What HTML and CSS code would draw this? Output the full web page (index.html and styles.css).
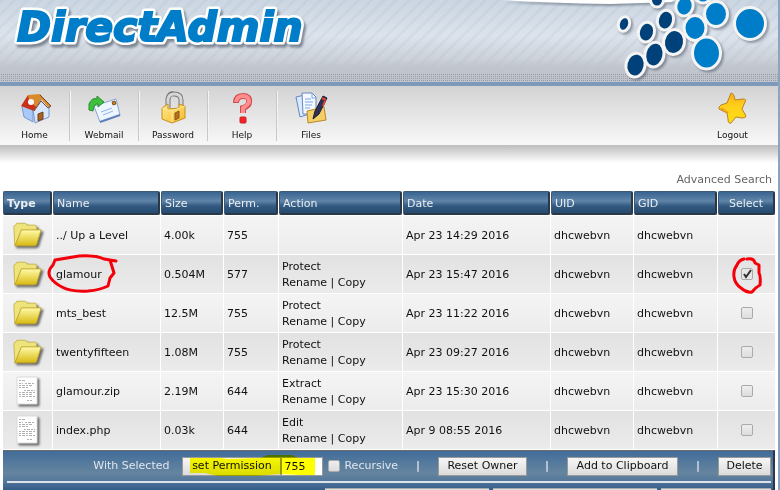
FILE: index.html
```html
<!DOCTYPE html>
<html lang="en">
<head>
<meta charset="utf-8">
<title>DirectAdmin</title>
<link rel="stylesheet" href="styles.css">
</head>
<body>
<svg class="defs" aria-hidden="true">
  <defs>
    <linearGradient id="fold" x1="0" y1="0" x2="0" y2="1"><stop offset="0" stop-color="#fffbaa"/><stop offset="1" stop-color="#d8b90f"/></linearGradient>
    <linearGradient id="gold" x1="0" y1="0" x2="1" y2="1"><stop offset="0" stop-color="#ffe98a"/><stop offset="1" stop-color="#f5bb2c"/></linearGradient>
    <linearGradient id="star" x1="0" y1="0" x2="0" y2="1"><stop offset="0" stop-color="#f9ac12"/><stop offset=".45" stop-color="#ffd11a"/><stop offset="1" stop-color="#ffde12"/></linearGradient>
    <symbol id="folder" viewBox="0 0 34 28">
      <path d="M3 25 L2 5 Q2 3 4 3 L5 1 H14 L16 3 H24 Q26 3 26 5 V14" fill="#efe47c" stroke="#c9b550"/>
      <path d="M3 25 L10 8 H31 L26 24 Q25 25 23 25 Z" fill="url(#fold)" stroke="#bfa12c"/>
    </symbol>
    <symbol id="doc" viewBox="0 0 24 30">
      <path d="M1 1 H21 V28 H1 Z" fill="#fff" stroke="#dcdcdc"/>
      <path d="M3 4.500 H9 M3 7.500 H7 M9 7.500 H18 M3 9.500 H17 M3 11.500 H12 M8 14.500 H19 M3 16.500 H19 M3 18.500 H17 M3 20.500 H19 M11 24.500 H16" stroke="#b0b0b0" stroke-dasharray="2 1 3 1"/>
    </symbol>
  </defs>
</svg>
<div class="page">
  <header class="banner">
    <h1 class="brand">
      <svg class="brand-art" width="320" height="60" viewBox="0 0 320 60" role="img" aria-label="DirectAdmin">
        <defs><text id="wordmark" x="17" y="41">DirectAdmin</text></defs>
        <use class="brand-edge" href="#wordmark"/>
        <use class="brand-face" href="#wordmark"/>
      </svg>
    </h1>
    <svg class="dots" width="280" height="86" viewBox="-100 0 280 86" aria-hidden="true">
      <path d="M-98 0H75L71 2Q40 3 10 4Q-50 3 -98 0Z" fill="#fff"/>
      <g stroke="#f4f4f4" stroke-width="3">
        <g fill="#00417a">
          <ellipse cx="24" cy="24" rx="5.500" ry="7.500" transform="rotate(18 24 24)"/>
          <ellipse cx="57" cy="0" rx="6.500" ry="7"/>
          <ellipse cx="46.500" cy="32" rx="8" ry="10" transform="rotate(15 46 32)"/>
          <ellipse cx="65.500" cy="20" rx="8" ry="10" transform="rotate(15 65 20)"/>
          <ellipse cx="35.500" cy="65" rx="9.500" ry="12" transform="rotate(12 35 65)"/>
          <ellipse cx="54.500" cy="54.500" rx="9.500" ry="12.500" transform="rotate(12 54 54)"/>
          <ellipse cx="74" cy="42" rx="10.500" ry="12.500" transform="rotate(10 74 42)"/>
        </g>
        <g fill="#007dc8">
          <ellipse cx="103" cy="-5" rx="8" ry="8"/>
          <ellipse cx="84.500" cy="6" rx="8.500" ry="10" transform="rotate(15 84 6)"/>
          <ellipse cx="95" cy="28" rx="11" ry="12.500"/>
          <ellipse cx="116" cy="14" rx="11.500" ry="12.500"/>
          <ellipse cx="106.500" cy="53" rx="14" ry="16"/>
          <ellipse cx="150" cy="23.500" rx="15.500" ry="16"/>
        </g>
      </g>
    </svg>
  </header>
  <nav class="toolbar">
    <a class="tool" href="#">
      <svg width="34" height="34" viewBox="0 0 34 34" aria-hidden="true">
        <path d="M4 16 L8 11 L15 19 V31 L6 26 Z" fill="#a9c9f8" stroke="#7898cc"/>
        <path d="M15 19 L24 8 L31 15 V26 L17 32 Z" fill="#d7e7ff" stroke="#7898cc"/>
        <path d="M3 15 L10 4 L24 6 L16 20 Z" fill="#c83218"/>
        <path d="M10 4 L22 3 L33 15 L30 16 L23 8 L18 16 L11 9Z" fill="#d98a2a"/>
        <path d="M22 4 L33 15 L30 17 L23 10 L16 20" fill="none" stroke="#78452a"/>
        <path d="M20 23 L25 21 V28 L20 30Z" fill="#a66420" stroke="#754117"/>
        <circle cx="13" cy="11" r="3" fill="#f5f8ff"/>
      </svg>
      <span>Home</span>
    </a>
    <a class="tool" href="#">
      <svg width="34" height="34" viewBox="0 0 34 34" aria-hidden="true">
        <path d="M7 15 L29 8 L33 24 L13 31 Z" fill="#edf5ff" stroke="#8aa6d8"/>
        <path d="M13 31 L33 24" stroke="#5f82bd" stroke-width="2"/>
        <path d="M14 21 L25 17 M16 24 L26 20" stroke="#8bb4ef"/>
        <path d="M25 11 L28 10 L29 13 L26 14Z" fill="#c97d20" stroke="#875c21"/>
        <path d="M2 19 V13 Q5 6 10 8 V5 L17 11 L11 16 V13 Q7 12 6 20 Z" fill="#3fc13e" stroke="#258f2d"/>
      </svg>
      <span>Webmail</span>
    </a>
    <a class="tool" href="#">
      <svg width="34" height="34" viewBox="0 0 34 34" aria-hidden="true">
        <path d="M12 17 V8 Q13 2 18 3 Q25 3 25 9 V15" fill="none" stroke="#777" stroke-width="5"/>
        <path d="M12 17 V8 Q13 3 18 3 Q25 3 25 9 V15" fill="none" stroke="#d6d6d6" stroke-width="3"/>
        <path d="M6 17 L12 13 V18 L23 17 V13 L29 15 V27 L16 32 L6 28Z" fill="url(#gold)" stroke="#c98f20"/>
        <path d="M6 17 L16 20 L29 15 M16 20 V31" fill="none" stroke="#ffe997"/>
        <path d="M19 22 L23 20 V27 L19 29Z" fill="#b57020" stroke="#8e571c"/>
      </svg>
      <span>Password</span>
    </a>
    <a class="tool" href="#">
      <svg width="34" height="34" viewBox="0 0 34 34" aria-hidden="true">
        <path d="M11 12 Q11 5 18 5 Q25 5 24 11 Q24 15 18 17 V22" fill="none" stroke="#cf4b50" stroke-width="6"/>
        <path d="M11 11 Q12 5 18 5 Q24 5 24 11 Q23 14 18 17 V22" fill="none" stroke="#ff8d8d" stroke-width="4"/>
        <rect x="15" y="26" width="6" height="6" rx="1" fill="#ff2024" stroke="#ba252a"/>
      </svg>
      <span>Help</span>
    </a>
    <a class="tool" href="#">
      <svg width="34" height="34" viewBox="0 0 34 34" aria-hidden="true">
        <path d="M2 6 L15 3 L18 22 L6 26 Z" fill="#d8eaff" stroke="#6687bd"/>
        <path d="M8 2 H18 L22 6 V23 H9 Z" fill="#f4f8ff" stroke="#6687bd"/>
        <path d="M18 2 V7 H22 M11 8 H17 M11 11 H19 M11 14 H18 M11 17 H16" fill="none" stroke="#7ca7e9"/>
        <path d="M13 20 L30 16 L32 29 L14 32Z" fill="#f5ce66" stroke="#b88929"/>
        <path d="M19 28 L21 20 L29 5 L33 7 L25 23 Z" fill="#303254" stroke="#191a32"/>
        <path d="M28 7 L32 9 M31 10 L29 15" stroke="#d84632" stroke-width="2"/>
      </svg>
      <span>Files</span>
    </a>
    <a class="tool tool-end" href="#">
      <svg width="34" height="34" viewBox="0 0 34 34" aria-hidden="true">
        <path d="M15 2 Q18 2 19 9 L27 8 Q31 8 29 11 L26 18 L30 25 Q30 27 26 27 L20 26 L15 32 Q12 33 12 28 L11 22 L3 18 Q2 16 5 14 L11 12 Z" fill="url(#star)" stroke="#b78228" stroke-linejoin="round"/>
        <path d="M12 22 L5 17" stroke="#ef9d10" stroke-width="2"/>
      </svg>
      <span>Logout</span>
    </a>
  </nav>
  <main class="content">
    <div class="search"><a href="#">Advanced Search</a></div>
    <table class="files">
      <colgroup><col class="c-type"><col class="c-name"><col class="c-size"><col class="c-perm"><col class="c-action"><col class="c-date"><col class="c-uid"><col class="c-gid"><col class="c-select"></colgroup>
      <thead>
        <tr><th class="sorted">Type</th><th>Name</th><th>Size</th><th>Perm.</th><th>Action</th><th>Date</th><th>UID</th><th>GID</th><th class="pick">Select</th></tr>
      </thead>
      <tbody>
        <tr><td class="kind"><svg class="folder" width="32" height="27"><use href="#folder"/></svg></td><td>../ Up a Level</td><td>4.00k</td><td>755</td><td></td><td>Apr 23 14:29 2016</td><td>dhcwebvn</td><td>dhcwebvn</td><td></td></tr>
        <tr><td class="kind"><svg class="folder" width="32" height="27"><use href="#folder"/></svg></td><td class="marked">glamour<svg class="mark mark-name" width="72" height="42" viewBox="0 0 72 42" aria-hidden="true"><path d="M69 8 L57 6 Q49 2 32 3 L8 7 L6 12 Q0 18 3 24 Q7 30 15 34 Q24 39 41 38 Q53 37 61 33 L63 25 L67 20 L63 7"/></svg></td><td>0.504M</td><td>577</td><td><a href="#">Protect</a><br><a href="#">Rename</a> | <a href="#">Copy</a></td><td>Apr 23 15:47 2016</td><td>dhcwebvn</td><td>dhcwebvn</td><td class="pick marked"><input type="checkbox" aria-label="Select glamour" checked><svg class="mark mark-check" width="32" height="38" viewBox="0 0 32 38" aria-hidden="true"><path d="M12 3 Q7 4 5 9 Q1 14 2 21 Q3 28 9 32 Q15 37 20 36 Q24 31 28 29 Q29 20 27 17 L27 9 L23 7 Q22 2 15 3"/></svg></td></tr>
        <tr><td class="kind"><svg class="folder" width="32" height="27"><use href="#folder"/></svg></td><td>mts_best</td><td>12.5M</td><td>755</td><td><a href="#">Protect</a><br><a href="#">Rename</a> | <a href="#">Copy</a></td><td>Apr 23 11:22 2016</td><td>dhcwebvn</td><td>dhcwebvn</td><td class="pick"><input type="checkbox" aria-label="Select mts_best"></td></tr>
        <tr><td class="kind"><svg class="folder" width="32" height="27"><use href="#folder"/></svg></td><td>twentyfifteen</td><td>1.08M</td><td>755</td><td><a href="#">Protect</a><br><a href="#">Rename</a> | <a href="#">Copy</a></td><td>Apr 23 09:27 2016</td><td>dhcwebvn</td><td>dhcwebvn</td><td class="pick"><input type="checkbox" aria-label="Select twentyfifteen"></td></tr>
        <tr><td class="kind"><svg class="doc" width="24" height="30"><use href="#doc"/></svg></td><td>glamour.zip</td><td>2.19M</td><td>644</td><td><a href="#">Extract</a><br><a href="#">Rename</a> | <a href="#">Copy</a></td><td>Apr 23 15:30 2016</td><td>dhcwebvn</td><td>dhcwebvn</td><td class="pick"><input type="checkbox" aria-label="Select glamour.zip"></td></tr>
        <tr><td class="kind"><svg class="doc" width="24" height="30"><use href="#doc"/></svg></td><td>index.php</td><td>0.03k</td><td>644</td><td><a href="#">Edit</a><br><a href="#">Rename</a> | <a href="#">Copy</a></td><td>Apr 9 08:55 2016</td><td>dhcwebvn</td><td>dhcwebvn</td><td class="pick"><input type="checkbox" aria-label="Select index.php"></td></tr>
      </tbody>
    </table>
    <form class="actions">
      <div class="bulk">
        <span class="with">With Selected</span>
        <span class="permission"><button class="b-perm" type="button">set Permission</button><input class="mode" type="text" value="755" aria-label="Permission"><svg class="highlight" width="132" height="24" viewBox="0 0 132 24" aria-hidden="true"><path d="M0 3 H32 L37 4 L70 3 L78 0 H102 L108 3 H125 V20 H110 L90 19 L65 21 H28 L14 18 H0Z"/></svg></span>
        <label class="recursive"><input type="checkbox">Recursive</label>
        <span class="bar">|</span>
        <button class="b-reset" type="button">Reset Owner</button>
        <span class="bar">|</span>
        <button class="b-clip" type="button">Add to Clipboard</button>
        <span class="bar">|</span>
        <button class="b-delete" type="button">Delete</button>
      </div>
      <div class="more"><span></span><span></span><span></span></div>
    </form>
  </main>
</div>
</body>
</html>
```
FILE: styles.css
```css
* { box-sizing: border-box; }
html { height: 100%; }
body { margin: 0; height: 100%; background: #fff; color: #111; font: 11px/16px Verdana, "DejaVu Sans", sans-serif; }
a { color: inherit; text-decoration: none; }
.defs { position: absolute; width: 0; height: 0; }
.page { min-height: 100%; border-right: 2px solid #8aa4c2; }

.banner {
  display: flex; justify-content: space-between; height: 86px; overflow: hidden;
  border-bottom: 4px solid #7d9abc;
  background:
    conic-gradient(#969ba5 25%, transparent 0) 0 74px / 2px 2px repeat-x,
    conic-gradient(#969ba5 25%, transparent 0) 0 76px / 2px 2px repeat-x,
    conic-gradient(#969ba5 25%, transparent 0) 0 78px / 2px 2px repeat-x,
    conic-gradient(#969ba5 25%, transparent 0) 0 80px / 2px 2px repeat-x,
    linear-gradient(transparent 60px, #c0c4cd 70px),
    repeating-linear-gradient(135deg, rgba(145, 160, 180, .1) 0 3px, transparent 3px 9px),
    linear-gradient(#cad6e2, #dce3ec 36px, #c9ced5 64px, #c0c4cd 72px);
}
.brand { margin: 0; line-height: 0; }
.brand-art { font: italic bold 41px "DejaVu Sans", Verdana, sans-serif; filter: drop-shadow(2px 3px 1px rgba(70, 80, 95, .6)); }
.brand-edge { fill: #fff; stroke: #fff; stroke-width: 7px; stroke-linejoin: round; }
.brand-face { fill: #007dc8; stroke: #007dc8; stroke-width: 2px; }
.dots { flex: none; margin-right: -2px; filter: drop-shadow(2px 2px 1px rgba(70, 80, 95, .5)); }

.toolbar { display: flex; height: 59px; padding-top: 5px; background: linear-gradient(#d3d3d3, #f8f8f8); }
.tool { display: flex; flex-direction: column; align-items: center; width: 69px; height: 50px; font-size: 9px; line-height: 12px; }
.tool svg { flex: none; margin-bottom: 4px; }
.tool + .tool:not(.tool-end) { border-left: 1px solid #c8c8c8; box-shadow: inset 1px 0 #f4f4f4; }
.tool-end { margin-left: auto; margin-right: 11px; }

.content { padding: 27px 2px 0; background: linear-gradient(#bdbdbd, #fff 18px) no-repeat; }
.search { display: flex; justify-content: flex-end; padding: 0 4px 2px; color: #666; }

.files { width: 100%; table-layout: fixed; border-spacing: 1px; }
.c-type { width: 49px; }
.c-name { width: 107px; }
.c-size { width: 62px; }
.c-perm { width: 54px; }
.c-action { width: 123px; }
.c-date { width: 147px; }
.c-uid { width: 82px; }
.c-gid { width: 83px; }
.c-select { width: 57px; }
th { height: 24px; padding: 2px 3px 0; text-align: left; font-weight: normal; color: #e8eef4; background: linear-gradient(#396591, #6084a8 9px, #325980 14px, #274b70); border: 1px solid #3c5a78; border-right: 2px solid #2b3846; border-bottom: 2px solid #2b3846; border-radius: 2px; }
th.sorted { font-weight: bold; }
td { height: 38px; padding: 2px 3px 0; white-space: nowrap; background: linear-gradient(#f4f4f4, #ececec); }
tbody tr:nth-child(even) td { background: linear-gradient(#e2e2e2, #ebebeb); }
th.pick, td.pick { text-align: center; }
td.pick, td.kind { padding-top: 0; }
.kind { line-height: 0; text-align: center; }
.folder, .doc { filter: drop-shadow(2px 2px 1px rgba(0, 0, 0, .55)); }
input[type="checkbox"] { appearance: none; width: 12px; height: 12px; margin: 0; border: 1px solid #aaa; border-radius: 2px; background: linear-gradient(#eee, #ddd); vertical-align: middle; }
input[type="checkbox"]:checked { background: url("data:image/svg+xml,%3Csvg xmlns='http://www.w3.org/2000/svg' viewBox='0 0 10 10'%3E%3Cpath d='M2 5l2 3 5-7' fill='none' stroke='%23333' stroke-width='2'/%3E%3C/svg%3E") #e6e6e6; }
.marked { position: relative; }
.mark { position: absolute; fill: none; stroke: #f4000a; stroke-width: 3; stroke-linecap: round; stroke-linejoin: round; }
.mark-name { left: -6px; top: -2px; }
.mark-check { left: 14px; top: 1px; }

.actions { margin: 0 1px; color: #dfe6ee; background: linear-gradient(#416c99, #65859f 22px, #54789c 30px, #365f8a 38px); border-top: 1px solid #6b6b6b; border-right: 2px solid #2b3846; }
.bulk { display: flex; align-items: center; justify-content: flex-end; gap: 17px; height: 32px; margin: 0 2px 0 4px; border-bottom: 2px solid #dde3e8; }
.with, .permission { margin-right: -4px; }
.permission { position: relative; display: flex; }
.bulk button { flex: none; height: 19px; padding: 0; font: inherit; color: #111; background: linear-gradient(#f6f6f6, #dcdcdc); border: 1px solid #999; white-space: nowrap; }
.bulk .b-perm { width: 99px; }
.b-reset { width: 89px; }
.b-clip { width: 111px; }
.b-delete { width: 53px; }
.mode { width: 42px; height: 19px; padding: 0 2px; font: inherit; color: #111; background: #fff; border: 1px solid #999; border-radius: 0; }
.highlight { position: absolute; left: 8px; top: -2px; fill: #ff0; mix-blend-mode: multiply; pointer-events: none; }
.recursive { display: flex; align-items: center; gap: 4px; margin-left: -8px; }
.bar { width: 6px; text-align: center; font-weight: bold; }
.more { display: flex; gap: 4px; height: 7px; margin: 0 2px 0 4px; padding: 5px 0 0 318px; }
.more span { flex: 163 1 0; background: #ddd; border-top: 1px solid #aaa; }
.more span:last-child { flex-grow: 110; }
```
